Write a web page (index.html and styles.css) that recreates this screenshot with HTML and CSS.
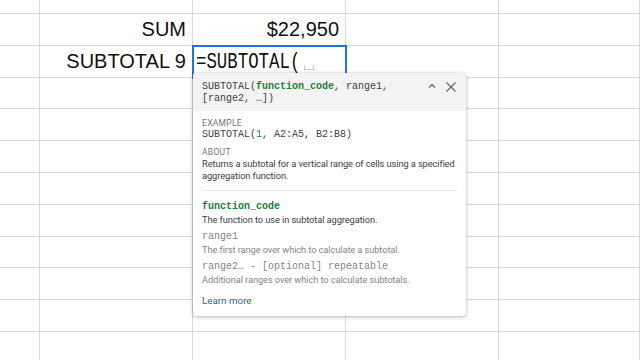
FILE: index.html
```html
<!DOCTYPE html>
<html lang="en">
<head>
  <meta charset="UTF-8" />
  <meta name="viewport" content="width=device-width, initial-scale=1.0"/>
  <title>SUBTOTAL</title>
  <link rel="stylesheet" href="styles.css">
</head>
<body>
  <div class="sheet">
    <div class="cell"></div><div class="cell"></div><div class="cell"></div><div class="cell"></div><div class="cell"></div>

    <div class="cell"></div>
    <div class="cell label">SUM</div>
    <div class="cell value">$22,950</div>
    <div class="cell"></div><div class="cell"></div>

    <div class="cell"></div>
    <div class="cell label">SUBTOTAL 9</div>
    <div class="cell active"><span class="formula">=SUBTOTAL(</span><span class="caret"></span></div>
    <div class="cell"></div><div class="cell"></div>

    <div class="cell"></div><div class="cell"></div><div class="cell"></div><div class="cell"></div><div class="cell"></div>
    <div class="cell"></div><div class="cell"></div><div class="cell"></div><div class="cell"></div><div class="cell"></div>
    <div class="cell"></div><div class="cell"></div><div class="cell"></div><div class="cell"></div><div class="cell"></div>
    <div class="cell"></div><div class="cell"></div><div class="cell"></div><div class="cell"></div><div class="cell"></div>
    <div class="cell"></div><div class="cell"></div><div class="cell"></div><div class="cell"></div><div class="cell"></div>
    <div class="cell"></div><div class="cell"></div><div class="cell"></div><div class="cell"></div><div class="cell"></div>
    <div class="cell"></div><div class="cell"></div><div class="cell"></div><div class="cell"></div><div class="cell"></div>
    <div class="cell"></div><div class="cell"></div><div class="cell"></div><div class="cell"></div><div class="cell"></div>
    <div class="cell"></div><div class="cell"></div><div class="cell"></div><div class="cell"></div><div class="cell"></div>
    <div class="cell"></div><div class="cell"></div><div class="cell"></div><div class="cell"></div><div class="cell"></div>
  </div>

  <div class="help-card">
    <div class="help-head">
      <div class="signature">SUBTOTAL(<b class="arg">function_code</b>, range1,<br>[range2, …])</div>
      <div class="head-icons">
        <svg width="10" height="10" viewBox="0 0 10 10"><path d="M2 6.5 L5 3.5 L8 6.5" fill="none" stroke="#5f6368" stroke-width="1.2"/></svg>
        <svg width="12" height="12" viewBox="0 0 12 12"><path d="M1.5 1.5 L10.5 10.5 M10.5 1.5 L1.5 10.5" fill="none" stroke="#5f6368" stroke-width="1.2"/></svg>
      </div>
    </div>
    <div class="help-body">
      <div class="caption">EXAMPLE</div>
      <div class="code">SUBTOTAL(<span class="arg-plain">1</span>, A2:A5, B2:B8)</div>
      <div class="caption">ABOUT</div>
      <div class="desc dark">Returns a subtotal for a vertical range of cells using a specified aggregation function.</div>
      <hr class="divider">
      <div class="param current">function_code</div>
      <div class="desc dark">The function to use in subtotal aggregation.</div>
      <div class="param">range1</div>
      <div class="desc">The first range over which to calculate a subtotal.</div>
      <div class="param">range2… - [optional] repeatable</div>
      <div class="desc">Additional ranges over which to calculate subtotals.</div>
      <a class="learn" href="#">Learn more</a>
    </div>
  </div>
</body>
</html>
```

FILE: styles.css
```css
body, html {
  margin: 0;
  padding: 0;
  height: 100%;
  background: #ffffff;
  overflow: hidden;
  font-family: 'Liberation Sans', Arial, sans-serif;
}

.sheet {
  display: grid;
  grid-template-columns: 40px 153px 153px 153px 1fr;
  grid-template-rows: 14px repeat(11, 31.8px);
}

.cell {
  border-right: 1px solid #d9d9d9;
  border-bottom: 1px solid #d9d9d9;
  font-size: 20px;
  line-height: 31px;
  color: #111;
  padding: 0 6px;
  white-space: nowrap;
}

.label,
.value {
  text-align: right;
}

.active {
  position: relative;
  outline: 2px solid #1a73e8;
  outline-offset: -1px;
  padding: 0 3px;
  display: flex;
  align-items: center;
}

.formula {
  font-family: 'Liberation Mono', monospace;
  font-size: 17.4px;
  display: inline-block;
  transform: scaleY(1.3);
  color: #111;
  margin-top: 3px;
}

.caret {
  display: inline-block;
  width: 8px;
  height: 4px;
  border: 1px solid #c8c8c8;
  border-top: none;
  margin: 12px 0 0 4px;
}

.help-card {
  position: absolute;
  left: 193px;
  top: 73px;
  width: 273px;
  height: 243px;
  background: #fff;
  border-radius: 3px;
  box-shadow: 0 1px 4px rgba(0,0,0,0.28), 0 0 1px rgba(0,0,0,0.2);
  overflow: hidden;
}

.help-head {
  display: flex;
  justify-content: space-between;
  background: #f3f3f3;
  padding: 8px 9px 6px 9px;
}

.signature {
  font-family: 'Liberation Mono', monospace;
  font-size: 10px;
  line-height: 12px;
  color: #3c4043;
}

.arg {
  color: #188038;
}

.arg-plain {
  color: #188038;
}

.head-icons {
  display: flex;
  gap: 8px;
  align-items: flex-start;
  padding-top: 0;
}

.help-body {
  padding: 7px 9px 0 9px;
}

.caption {
  font-family: Roboto, 'Liberation Sans', sans-serif;
  font-size: 8.5px;
  letter-spacing: 0.3px;
  color: #70757a;
  line-height: 10px;
  margin-bottom: 1px;
}

.code {
  font-family: 'Liberation Mono', monospace;
  font-size: 10px;
  line-height: 12px;
  color: #3c4043;
  margin-bottom: 6px;
}

.desc {
  font-family: Roboto, 'Liberation Sans', sans-serif;
  font-size: 9.3px;
  line-height: 12px;
  color: #80868b;
  letter-spacing: -0.1px;
  margin-top: 1px;
}

.desc.dark {
  color: #3c4043;
}

.divider {
  border: none;
  border-top: 1px solid #e6e6e6;
  margin: 8px 0 10px 0;
}

.param {
  font-family: 'Liberation Mono', monospace;
  font-size: 10px;
  line-height: 12px;
  color: #80868b;
  margin-top: 5px;
}

.param.current {
  margin-top: 0;
  color: #188038;
  font-weight: bold;
}

.learn {
  display: block;
  margin-top: 9px;
  font-family: Roboto, 'Liberation Sans', sans-serif;
  font-size: 9.8px;
  line-height: 12px;
  color: #2f5fa8;
  text-decoration: none;
}
```
